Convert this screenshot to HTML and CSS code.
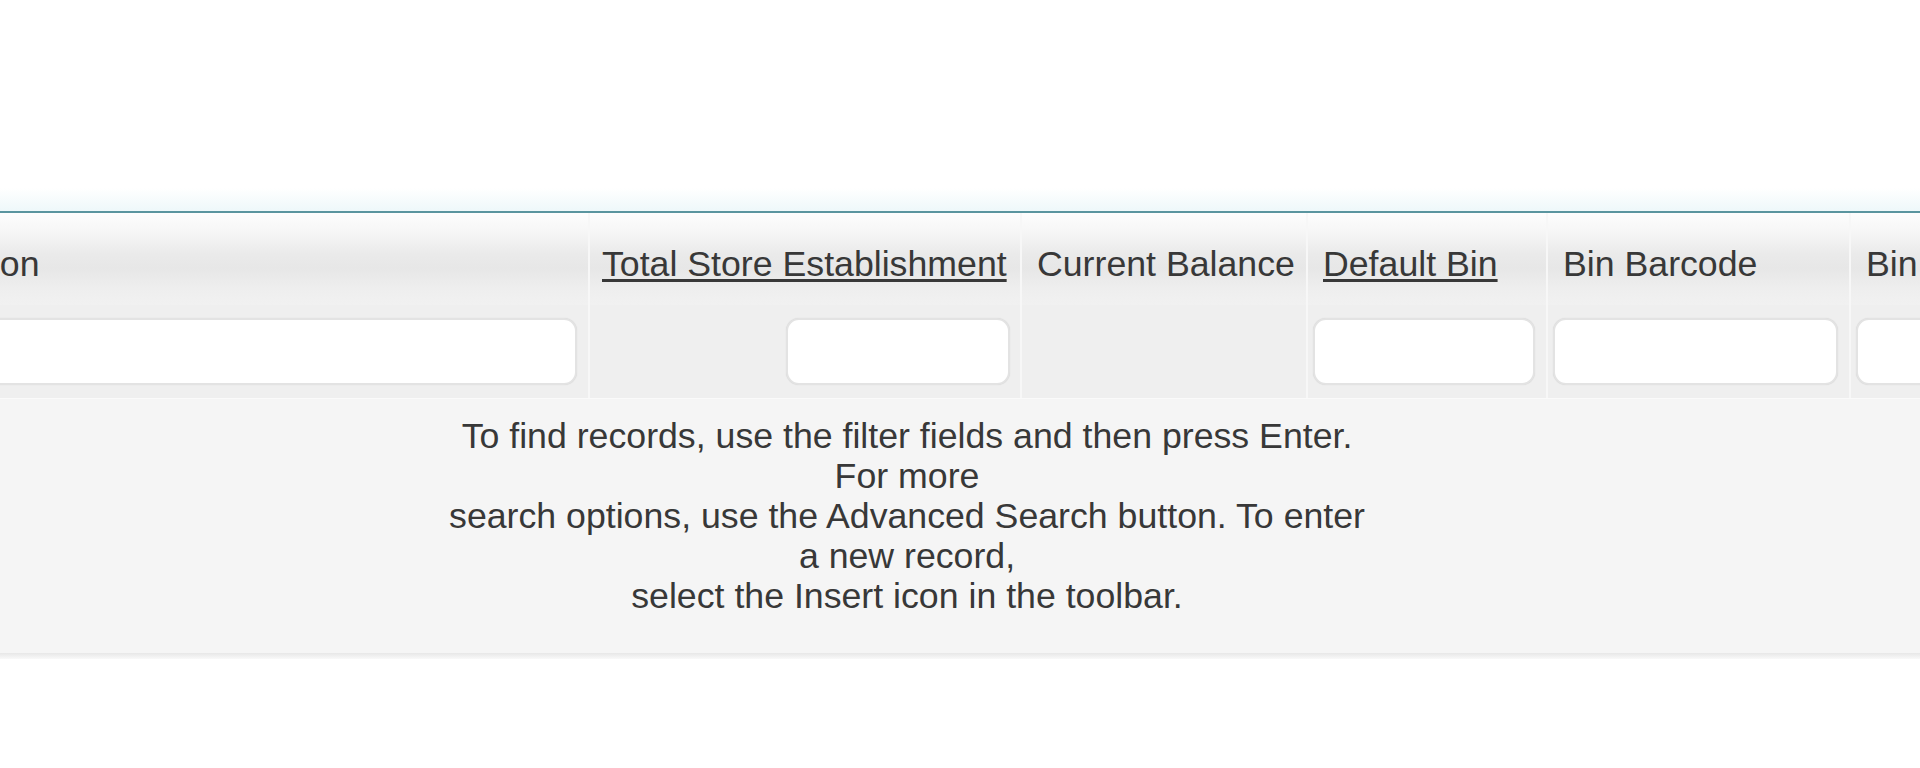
FILE: index.html
```html
<!DOCTYPE html>
<html lang="en">
<head>
<meta charset="utf-8">
<title>Store Items</title>
<link rel="stylesheet" href="styles.css">
</head>
<body>
<div class="page">
  <div class="top-space"></div>
  <div class="rule"></div>
  <div class="grid-wrap">
    <div class="grid">
      <div class="hcell">Description</div>
      <div class="hcell hcell-tight"><span class="link">Total Store Establishment</span></div>
      <div class="hcell">Current Balance</div>
      <div class="hcell"><span class="link">Default Bin</span></div>
      <div class="hcell">Bin Barcode</div>
      <div class="hcell">Bin Location</div>

      <div class="fcell"><input class="filter" type="text"></div>
      <div class="fcell fcell-right"><input class="filter filter-short" type="text"></div>
      <div class="fcell"></div>
      <div class="fcell"><input class="filter" type="text"></div>
      <div class="fcell"><input class="filter" type="text"></div>
      <div class="fcell"><input class="filter" type="text"></div>
    </div>
  </div>
  <div class="message">
    <p class="message-text">To find records, use the filter fields and then press Enter.<br>For more<br>search options, use the Advanced Search button. To enter<br>a new record,<br>select the Insert icon in the toolbar.</p>
  </div>
  <div class="message-edge"></div>
</div>
</body>
</html>
```
FILE: styles.css
```css
html, body {
  margin: 0;
  padding: 0;
  background: #ffffff;
  overflow: hidden;
}

.page {
  width: 1920px;
  height: 768px;
  font-family: "Liberation Sans", Arial, sans-serif;
  font-size: 35.7px;
  line-height: 40px;
  color: #383838;
}

.top-space {
  height: 211px;
  background: linear-gradient(to bottom, #ffffff 0, #ffffff 188px, #eef8fa 211px);
}

.rule {
  height: 2px;
  background: #5a959f;
}

.grid-wrap {
  width: 1920px;
  overflow: hidden;
}

.grid {
  display: grid;
  grid-template-columns: 744px 432px 286px 240px 303px 320px;
  grid-template-rows: 92px 93px;
  margin-left: -154px;
  width: max-content;
}

.hcell {
  padding: 31px 10px 0 15px;
  white-space: nowrap;
  overflow: hidden;
  background: linear-gradient(to bottom, #fdfdfd 0%, #f7f7f7 18%, #eaeaea 45%, #e7e7e7 60%, #eeeeee 82%, #f1f1f1 100%);
  border-right: 2px solid #f7f7f7;
  box-sizing: border-box;
}

.hcell-tight {
  padding-left: 12px;
}

.link {
  text-decoration: underline;
  text-underline-offset: 3px;
}

.fcell {
  display: flex;
  padding: 13px 11px 13px 5px;
  background: #efefef;
  border-right: 2px solid #f7f7f7;
  box-sizing: border-box;
}

.fcell-right {
  justify-content: flex-end;
  padding-right: 10px;
}

.filter {
  flex: 1;
  min-width: 0;
  height: 67px;
  box-sizing: border-box;
  margin: 0;
  padding: 0 12px;
  border: 2px solid #e3e3e3;
  border-radius: 13px;
  background: #ffffff;
  box-shadow: 0 0 1px #cfcfcf;
  font: inherit;
  outline: none;
}

.filter-short {
  flex: 0 0 224px;
}

.message {
  height: 255px;
  box-sizing: border-box;
  padding-top: 17px;
  background: #f5f5f5;
  border-top: 1px solid #fafafa;
}

.message-text {
  margin: 0 0 0 437px;
  width: 940px;
  text-align: center;
  white-space: nowrap;
}

.message-edge {
  height: 6px;
  background: linear-gradient(to bottom, #e7e7e7, #f9f9f9);
}
```
